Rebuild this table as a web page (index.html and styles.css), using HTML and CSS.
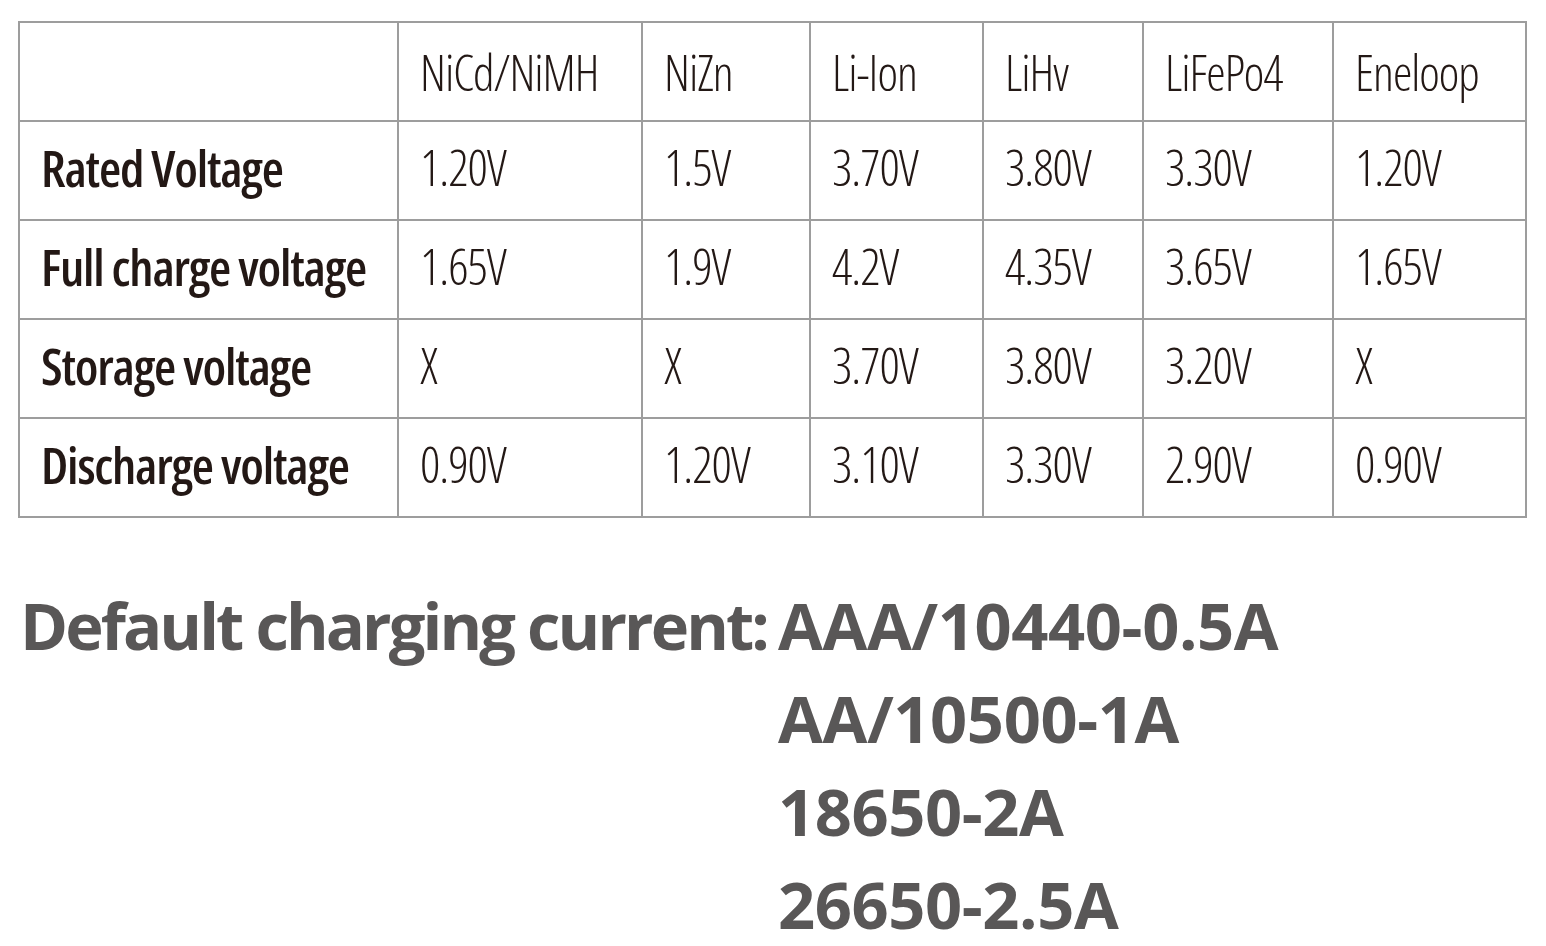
FILE: index.html
```html
<!DOCTYPE html>
<html lang="en">
<head>
<meta charset="utf-8">
<title>Battery voltage table</title>
<link rel="stylesheet" href="styles.css">
</head>
<body>
<main class="page">
  <table class="spec">
    <colgroup>
      <col class="c-label">
      <col class="c-nicd">
      <col class="c-nizn">
      <col class="c-liion">
      <col class="c-lihv">
      <col class="c-lifepo">
      <col class="c-eneloop">
    </colgroup>
    <thead>
      <tr>
        <th class="corner"></th>
        <th>NiCd/NiMH</th>
        <th>NiZn</th>
        <th>Li-Ion</th>
        <th>LiHv</th>
        <th>LiFePo4</th>
        <th>Eneloop</th>
      </tr>
    </thead>
    <tbody>
      <tr>
        <th class="label">Rated Voltage</th>
        <td>1.20V</td><td>1.5V</td><td>3.70V</td><td>3.80V</td><td>3.30V</td><td>1.20V</td>
      </tr>
      <tr>
        <th class="label">Full charge voltage</th>
        <td>1.65V</td><td>1.9V</td><td>4.2V</td><td>4.35V</td><td>3.65V</td><td>1.65V</td>
      </tr>
      <tr>
        <th class="label">Storage voltage</th>
        <td>X</td><td>X</td><td>3.70V</td><td>3.80V</td><td>3.20V</td><td>X</td>
      </tr>
      <tr>
        <th class="label">Discharge voltage</th>
        <td>0.90V</td><td>1.20V</td><td>3.10V</td><td>3.30V</td><td>2.90V</td><td>0.90V</td>
      </tr>
    </tbody>
  </table>

  <section class="charging">
    <div class="charging-title">Default charging current:</div>
    <ul class="charging-list">
      <li>AAA/10440-0.5A</li>
      <li>AA/10500-1A</li>
      <li>18650-2A</li>
      <li>26650-2.5A</li>
    </ul>
  </section>
</main>
</body>
</html>
```
FILE: styles.css
```css
html, body {
  margin: 0;
  padding: 0;
  background: #ffffff;
}

.page {
  padding: 21px 0 0 18px;
}

.spec {
  border-collapse: collapse;
  table-layout: fixed;
  width: 1507px;
  color: #231815;
  font-family: "Open Sans", "Roboto", sans-serif;
  font-stretch: 75%;
}

.c-label { width: 379px; }
.c-nicd { width: 244px; }
.c-nizn { width: 168px; }
.c-liion { width: 173px; }
.c-lihv { width: 160px; }
.c-lifepo { width: 190px; }
.c-eneloop { width: 193px; }

.spec th,
.spec td {
  border: 2px solid #9d9d9d;
  height: 89px;
  padding: 0 0 8px 21px;
  text-align: left;
  vertical-align: middle;
  white-space: nowrap;
  line-height: 60px;
}

.spec thead th {
  height: 97px;
  padding-bottom: 0;
  font-size: 49px;
  font-weight: 300;
  letter-spacing: -1px;
}

.spec td {
  font-size: 50px;
  font-weight: 300;
  letter-spacing: -1px;
}

.spec .label {
  font-size: 51px;
  font-weight: 600;
  letter-spacing: -1.2px;
  padding-left: 21px;
}

.charging {
  display: grid;
  grid-template-columns: 758px auto;
  margin-top: 61px;
  padding-left: 2px;
  color: #595757;
  font-family: "Open Sans", "Roboto", sans-serif;
  font-weight: 700;
  font-size: 65px;
  line-height: 93px;
  white-space: nowrap;
}

.charging-title {
  letter-spacing: -2.9px;
}

.charging-list {
  list-style: none;
  margin: 0;
  padding: 0;
  letter-spacing: -0.4px;
}
```
